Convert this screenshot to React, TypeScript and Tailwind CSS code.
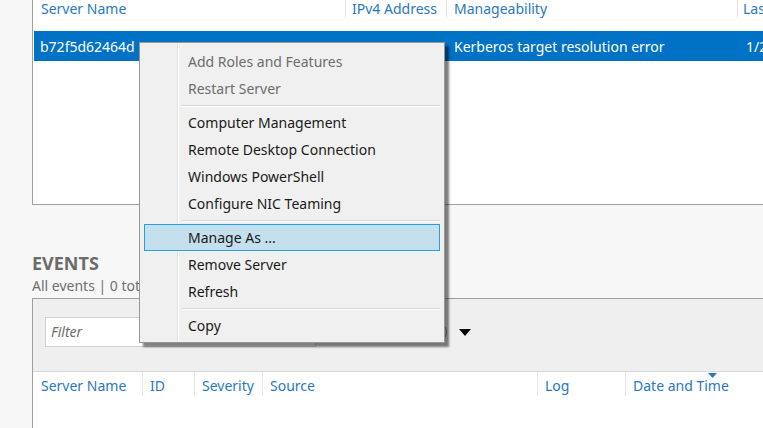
import React from "react";

const serverCols = [
  { label: "Server Name", w: "w-[312px]", pl: "pl-[8px]" },
  { label: "IPv4 Address", w: "w-[101px]", pl: "pl-[7px]" },
  { label: "Manageability", w: "w-[291px]", pl: "pl-[8px]" },
  { label: "Last Update", w: "w-[100px]", pl: "pl-[6px]" },
];

const eventCols = [
  { label: "Server Name", w: "w-[109px]" },
  { label: "ID", w: "w-[52px]" },
  { label: "Severity", w: "w-[68px]" },
  { label: "Source", w: "w-[275px]" },
  { label: "Log", w: "w-[88px]" },
  { label: "Date and Time", w: "w-[140px]", sorted: true },
];

type Item = { label: string; disabled?: boolean; active?: boolean } | "sep";

const menuItems: Item[] = [
  { label: "Add Roles and Features", disabled: true },
  { label: "Restart Server", disabled: true },
  "sep",
  { label: "Computer Management" },
  { label: "Remote Desktop Connection" },
  { label: "Windows PowerShell" },
  { label: "Configure NIC Teaming" },
  "sep",
  { label: "Manage As ...", active: true },
  { label: "Remove Server" },
  { label: "Refresh" },
  "sep",
  { label: "Copy" },
];

const ContextMenu = () => (
  <div className="absolute left-[139px] top-[42px] w-[306px] h-[301px] bg-[#f0f0f0] border border-[#979797] shadow-[4px_4px_2px_rgba(0,0,0,0.5)] pt-[5px] pb-[3px]">
    {/* gutter line */}
    <div className="absolute left-[37px] top-0 bottom-0 w-px bg-[#e2e3e3]" />
    <div className="absolute left-[38px] top-0 bottom-0 w-px bg-white" />
    {menuItems.map((item, i) =>
      item === "sep" ? (
        <div key={i} className="h-[7px] flex items-center pl-[42px] pr-[4px]">
          <div className="w-full h-[2px] bg-[#d7d7d7] border-b border-white" />
        </div>
      ) : (
        <div
          key={i}
          className={`relative h-[27px] mx-[4px] flex items-center pl-[43px] border ${
            item.active ? "bg-[#c4dfee] border-[#26a0da]" : "border-transparent"
          } ${item.disabled ? "text-[#6d6d6d]" : "text-[#1a1a1a]"}`}
        >
          {item.label}
        </div>
      )
    )}
  </div>
);

export default function App() {
  return (
    <div className="relative w-[763px] h-[428px] overflow-hidden bg-[#f7f7f7] font-['Noto_Sans',sans-serif] text-[14px] leading-[20px]">
      {/* Servers panel */}
      <div className="ml-[32px] h-[205px] bg-white border-l border-b border-[#a0a0a0]">
        <div className="flex h-[31px] text-[#2a78c0]">
          {serverCols.map((c, i) => (
            <div key={c.label} className={`relative shrink-0 ${c.w} ${c.pl} leading-[17px] whitespace-nowrap`}>
              {i > 0 && <div className="absolute left-0 top-0 h-[17px] w-px bg-[#e4e4e4]" />}
              {c.label}
            </div>
          ))}
        </div>
        <div className="ml-[1px] h-[30px] bg-[#0072c6] text-white flex items-center pt-[1px]">
          <div className="w-[311px] pl-[6px] shrink-0">b72f5d62464d</div>
          <div className="w-[103px] shrink-0" />
          <div className="w-[291px] shrink-0 pl-[6px]">Kerberos target resolution error</div>
          <div className="shrink-0 pl-[7px]">1/27/2016</div>
        </div>
      </div>

      {/* Events */}
      <div className="ml-[32px] mt-[47px]">
        <div className="text-[18px] leading-[22px] font-bold text-[#6b6b6b]">EVENTS</div>
        <div className="mt-[2px] text-[#707070]">All events | 0 total</div>
        <div className="mt-[2px] h-[200px] bg-white border-l border-t border-[#a0a0a0]">
          <div className="h-[73px] bg-[#efefef] border-b border-[#d9d9d9] pt-[18px] pl-[12px] flex items-start">
            <div className="w-[271px] h-[30px] bg-white border border-[#d0d0d0] flex items-center pl-[5px] italic text-[#6d6d6d]">
              Filter
            </div>
            <div className="ml-[111px] mt-[5px] w-[20px] h-[20px] rounded-full border border-[#7a7a7a]" />
            <svg className="ml-[12px] mt-[12px]" width="12" height="7" viewBox="0 0 12 7">
              <path d="M0 0 L12 0 L6 7 Z" fill="#000" />
            </svg>
          </div>
          <div className="flex h-[28px] text-[#2a78c0]">
            {eventCols.map((c, i) => (
              <div key={c.label} className={`relative shrink-0 ${c.w} pl-[8px] pt-[4px]`}>
                {i > 0 && <div className="absolute left-0 top-0 h-[24px] w-px bg-[#e6e6e6]" />}
                {c.sorted && (
                  <svg className="absolute left-[83px] top-[1px]" width="9" height="5" viewBox="0 0 9 5">
                    <path d="M0 0 L9 0 L4.5 5 Z" fill="#2a78c0" />
                  </svg>
                )}
                {c.label}
              </div>
            ))}
          </div>
        </div>
      </div>

      <ContextMenu />
    </div>
  );
}
